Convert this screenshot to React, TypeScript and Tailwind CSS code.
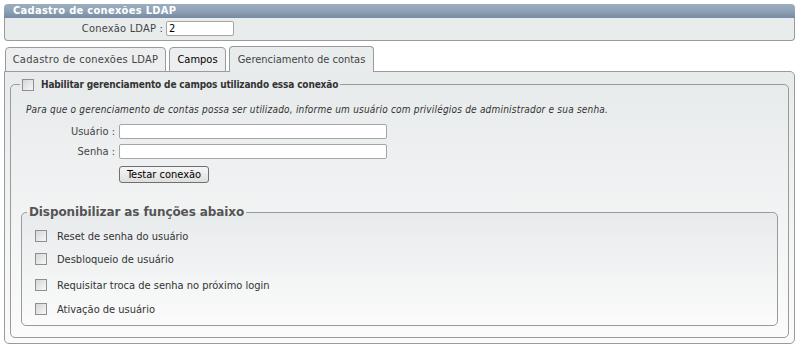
const font = "font-['DejaVu_Sans_Condensed','DejaVu_Sans',sans-serif]";

function Check() {
  return (
    <span className="inline-block w-[12px] h-[12px] shrink-0 border border-[#8e8f8f] bg-gradient-to-br from-[#d6d6d6] to-[#f7f7f7]" />
  );
}

const functions = [
  { label: "Reset de senha do usuário", mt: "mt-[11px]" },
  { label: "Desbloqueio de usuário", mt: "mt-[11px]" },
  { label: "Requisitar troca de senha no próximo login", mt: "mt-[14px]" },
  { label: "Ativação de usuário", mt: "mt-[12px]" },
];

export default function App() {
  return (
    <div className={`${font} text-[11px] leading-[15px] text-[#333] bg-white w-[799px] h-[347px] px-[4px] pt-[4px]`}>
      {/* cadastro header */}
      <div className="h-[14px] rounded-t-[4px] bg-gradient-to-b from-[#9badbe] via-[#8fa2b5] to-[#758aa1] pl-[9px] text-white font-bold tracking-[0.3px] leading-[14px]">
        Cadastro de conexões LDAP
      </div>
      <div className="flex items-center h-[23px] pb-px bg-[#e9eced] border border-t-0 border-[#9a9a9a] rounded-b-[4px]">
        <span className="w-[161px] text-right pr-[3px] text-[#444] tracking-[0.2px]">Conexão LDAP :</span>
        <input
          defaultValue="2"
          className="w-[68px] h-[15px] px-[2px] border border-[#a5a5a5] rounded-[2px] bg-white text-[11px] text-black outline-none"
        />
      </div>

      {/* tabs */}
      <div className="flex items-end gap-[3px] mt-[6px] pl-px h-[25px] relative z-10 -mb-px">
        <div className="w-[161px] h-[25px] flex items-center justify-center border border-[#9a9a9a] rounded-t-[4px] bg-[#eceeef] text-[#444] tracking-[0.3px]">
          Cadastro de conexões LDAP
        </div>
        <div className="w-[57px] h-[25px] flex items-center justify-center border border-[#9a9a9a] rounded-t-[4px] bg-[#eceeef] text-black">
          Campos
        </div>
        <div className="w-[145px] h-[26px] flex items-center justify-center pb-px border border-b-0 border-[#9a9a9a] rounded-t-[4px] bg-[#e9eced] text-[#444]">
          Gerenciamento de contas
        </div>
      </div>

      <div className="h-[273px] border border-[#9a9a9a] rounded-b-[5px] rounded-tr-[5px] bg-gradient-to-b from-[#e8ebec] to-[#fbfbfb] px-[5px] pt-[6px] pb-[5px]">
        <fieldset className="h-full border border-[#9a9a9a] rounded-[5px] bg-gradient-to-b from-[#e8ebec] to-[#fbfbfb] pb-[11px]">
          <legend className="ml-[9px] px-[2px] flex items-center gap-[7px] font-bold text-[10px] tracking-[-0.15px] text-[#333] leading-[13px]">
            <Check />
            Habilitar gerenciamento de campos utilizando essa conexão
          </legend>

          <div className="pl-[15px] pt-[12px]">
            <p className="italic text-[10px] tracking-[0.2px] text-[#333] leading-[14px]">
              Para que o gerenciamento de contas possa ser utilizado, informe um usuário com privilégios de administrador e sua senha.
            </p>
            <div className="flex items-center mt-[7px]">
              <span className="w-[93px] text-right pr-[4px] text-[#444]">Usuário :</span>
              <input className="w-[268px] h-[15px] border border-[#a5a5a5] rounded-[2px] bg-white outline-none" />
            </div>
            <div className="flex items-center mt-[5px]">
              <span className="w-[93px] text-right pr-[4px] text-[#444]">Senha :</span>
              <input type="password" className="w-[268px] h-[15px] border border-[#a5a5a5] rounded-[2px] bg-white outline-none" />
            </div>
            <button className="block ml-[93px] mt-[7px] w-[90px] h-[17px] border border-[#707070] rounded-[3px] bg-gradient-to-b from-[#f6f6f6] to-[#dedede] text-black text-[11px] leading-[15px]">
              Testar conexão
            </button>
          </div>

          <fieldset className="mx-[10px] mt-[22px] border border-[#9a9a9a] rounded-[5px] bg-gradient-to-b from-[#e8ebec] to-[#fbfbfb] pb-[10px]">
            <legend className="ml-[5px] px-[2px] font-['DejaVu_Sans',sans-serif] font-bold text-[12px] tracking-[-0.1px] text-[#555] leading-[14px]">
              Disponibilizar as funções abaixo
            </legend>
            {functions.map((f) => (
              <div key={f.label} className={`flex items-center gap-[10px] h-[12px] pl-[13px] ${f.mt}`}>
                <Check />
                <span className="text-[#333]">{f.label}</span>
              </div>
            ))}
          </fieldset>
        </fieldset>
      </div>
    </div>
  );
}
